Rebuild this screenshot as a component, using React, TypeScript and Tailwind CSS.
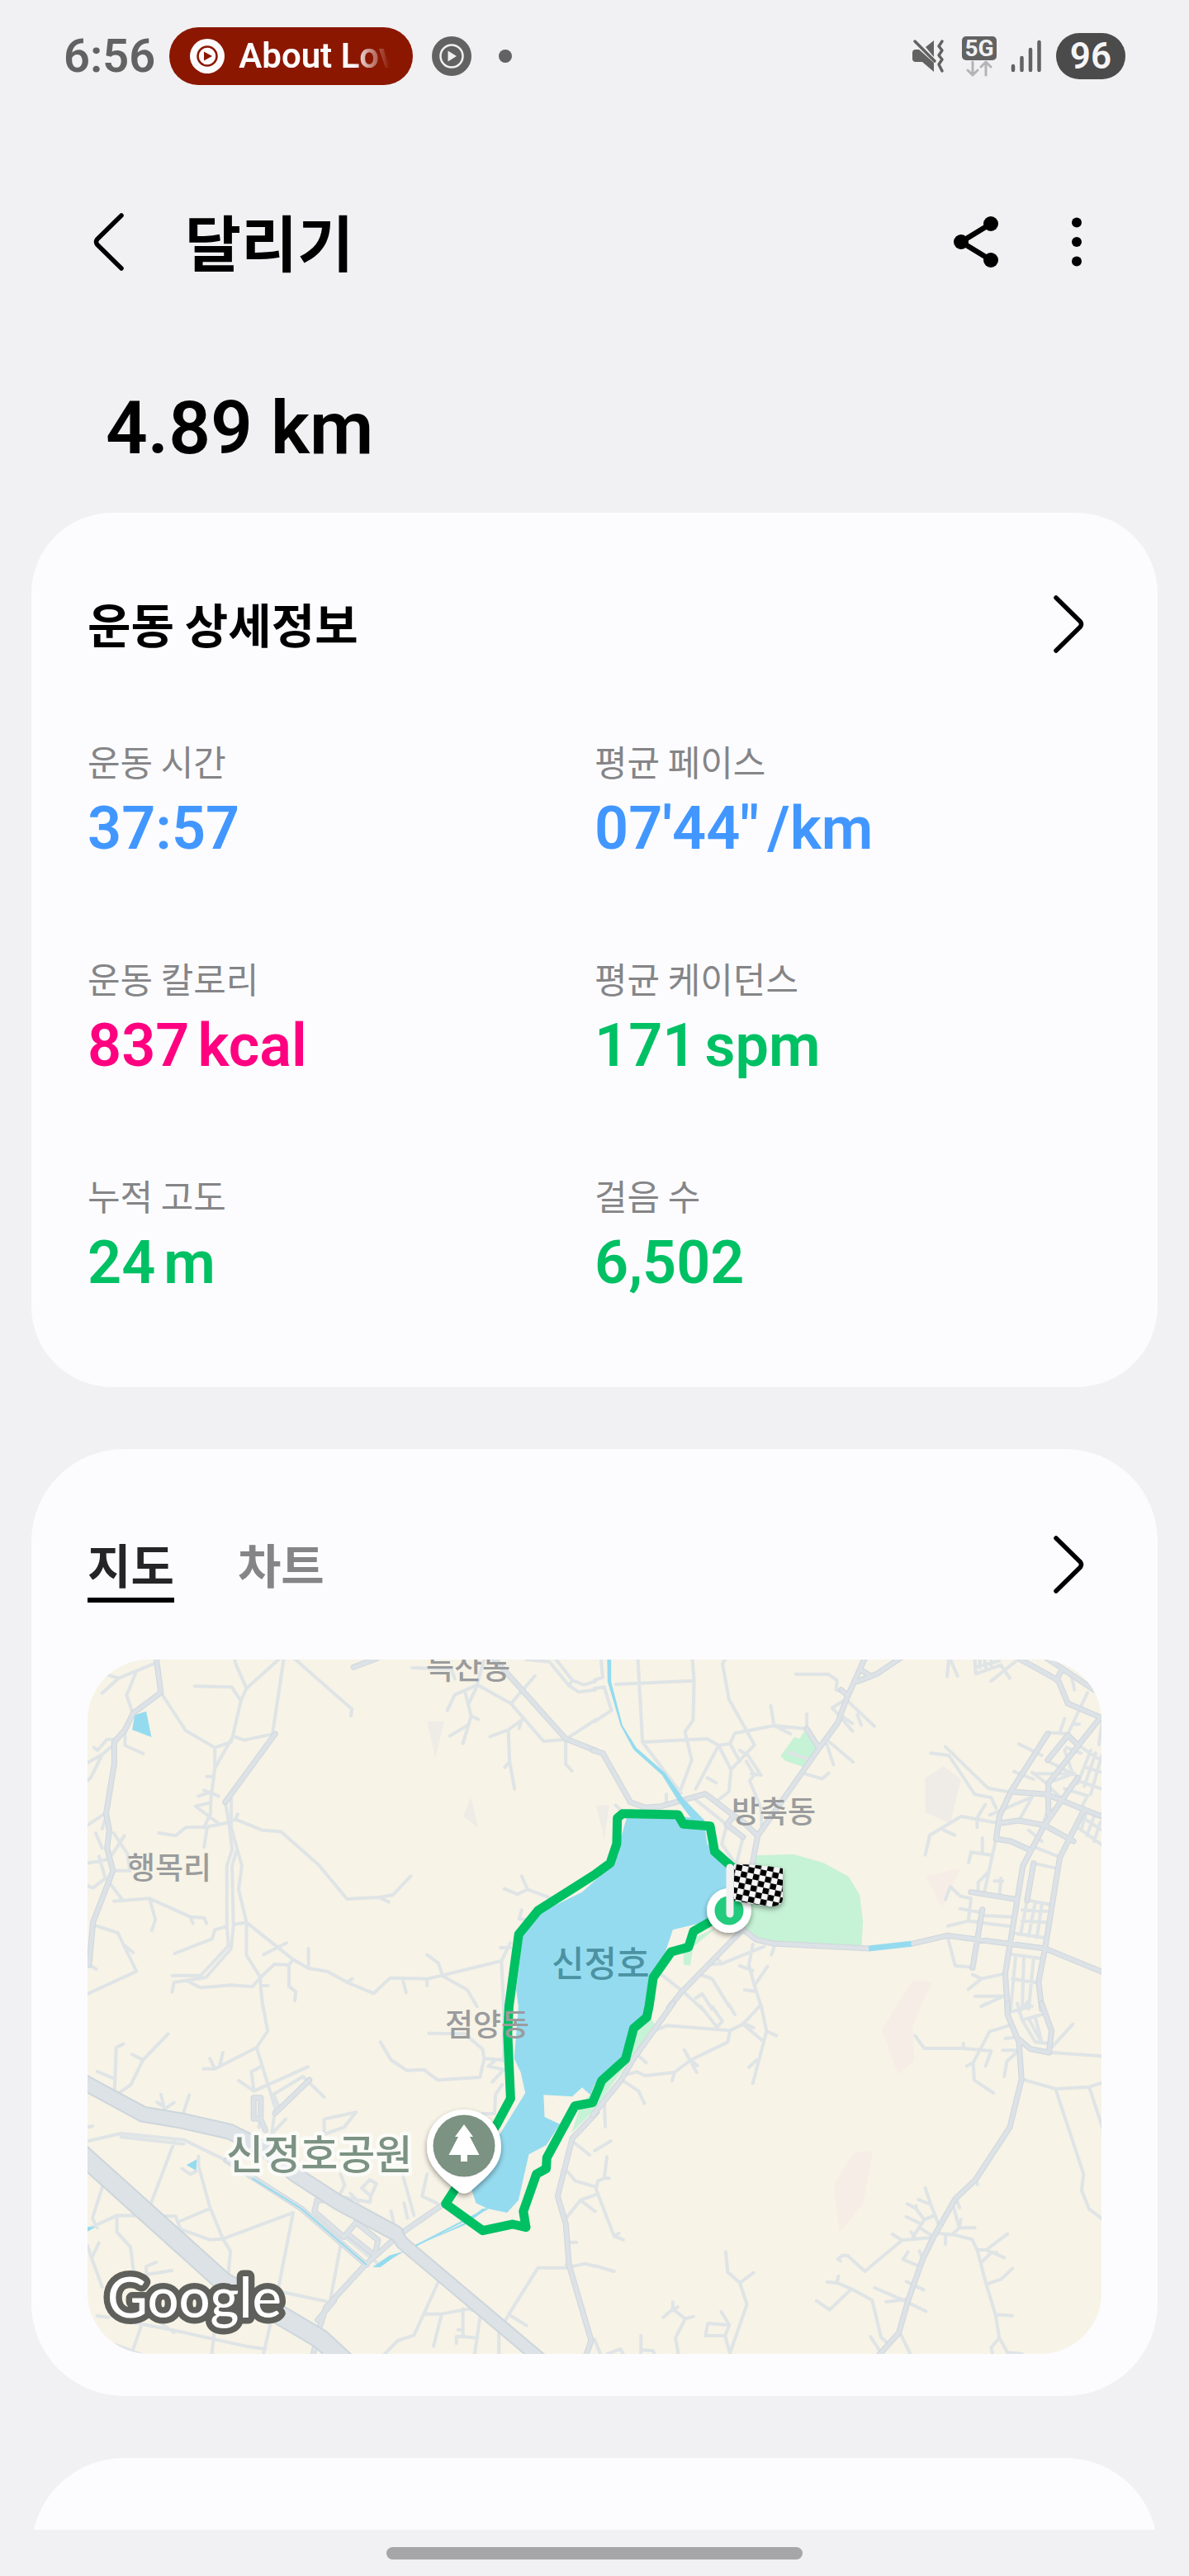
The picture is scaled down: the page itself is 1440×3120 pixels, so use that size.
import React, { useState } from 'react';

const metrics = [
  { label: '운동 시간', value: '37:57', unit: '', color: 'text-[#4297ff]' },
  { label: '평균 페이스', value: '07\'44"', unit: '/km', color: 'text-[#4297ff]' },
  { label: '운동 칼로리', value: '837', unit: 'kcal', color: 'text-[#ff0080]' },
  { label: '평균 케이던스', value: '171', unit: 'spm', color: 'text-[#00c064]' },
  { label: '누적 고도', value: '24', unit: 'm', color: 'text-[#00c064]' },
  { label: '걸음 수', value: '6,502', unit: '', color: 'text-[#00c064]' }
];

const tabs = ['지도', '차트'];

// Map tiles: each one has its own 1568x1290 grid, (x, y) is its place in the mosaic
const tiles = [
  {
    x: 0,
    y: 0,
    minor:
      'M75 85L110 98L225 42M60 152L110 98M165 72L135 160L152 220M240 150L316 288L405 350L455 330L460 308L485 180L502 135L605 25M467 25V40L502 135M343 127L457 130L485 180M616 30L582 298M460 308L495 323L592 298M650 28L825 210L822 235M455 320L405 425M405 350V425L392 550V590M130 290V342L186 372M35 350L46 360L75 320H95M15 405L60 375L95 340M60 375L25 460L15 470M15 632L68 590M60 645L72 600M380 455H400M355 527L390 512L416 526M372 505L390 515M392 550L346 563L416 625M392 590L372 640M233 660L285 670L316 640L382 638L448 622L468 610L550 650L607 655L722 775L810 900L908 894L950 886L1005 817M908 894L938 911M382 638L372 712M468 610L475 592M437 548L448 622L458 720L442 780V1000L447 1070L362 1178H275M455 525V640L488 780L478 865L502 985L645 1120L692 1152L750 1163L810 1203L892 1243L942 1187L1058 1190L1103 1177L1283 1125L1310 1060M470 730L458 780L462 1000L455 1080L378 1185L280 1203L274 1238M325 1200L360 1222L455 1213L520 1219L545 1185L588 1137L632 1140L645 1120M502 985V1105L545 1185V1215L553 1300M545 1215H568M632 1140V1217L653 1237L650 1270M692 1152V1080M555 1102L625 1060M502 985L462 993M440 1000L405 1012L397 1045L282 1098M810 1203L826 1190M980 1190L991 1240M1055 1190V1215M1055 1103L1090 1133L1103 1180L1178 1230L1208 1290M1283 1125L1290 1300M96 908L205 898L330 965L372 968L380 988M330 965L338 988M205 898L223 975L212 1015M85 845L120 900M35 995L108 1023L165 1163L15 1245M130 1070L155 1095M95 797H145L137 735L95 660M128 670L90 740M15 770L80 755M50 745L70 825L32 860L15 852M40 660L60 715M20 1140L42 1155M1010 60L1130 65L1140 100M1210 122L1140 158L1117 215M1210 122L1183 190M1172 150L1190 235L1165 335M1190 235L1212 247M1125 308L1180 268M1210 122L1312 190L1412 327L1480 320L1570 250M1312 190L1385 90M1345 250L1304 285L1248 310M1345 250L1337 280M1304 285L1308 400L1323 500M1308 400L1293 422M1480 320V410L1499 435M1360 30L1430 38L1490 125L1520 148L1570 140M1450 30L1500 105L1535 122L1570 110M1500 105L1490 125M1230 30L1208 122M1345 817L1363 865L1430 895M1292 863L1333 883L1363 865M1345 940L1337 972L1355 975M1280 1077H1310',
    major:
      'M225 20L240 150L155 225L130 285L97 330V410L72 590L82 650L75 715L93 797L32 985L20 1140M1255 20L1480 318L1575 362M830 58L900 26M590 300L437 548'
  },
  {
    x: 1568,
    y: 0,
    minor:
      'M0 255L52 215L30 130L0 135M20 30L25 95L0 105M133 30L147 330L345 318L380 342M65 120L303 107M300 30L305 107L302 250L277 293L298 395L265 500M147 330L265 515M400 30L392 45L412 175L490 340L418 430L412 510L380 540M380 342L310 500M380 342L415 335L430 298L550 270L650 282V228M540 198L550 270L600 300M380 342L418 430M415 335L445 400M445 360L470 378L510 450L480 445M465 400L490 450L475 470L510 570L512 640M345 460L372 478M616 83H715L743 105L740 140L765 150M765 178L728 205L790 290M745 225L790 262M775 180L857 272M805 230L817 268M720 330L792 402M712 340L732 412M645 445L698 463L717 443M220 520V560M65 560L100 600M300 530L405 630L390 700L430 770M455 675L435 770M350 1138L390 1135L520 1072M375 1115L390 1135M485 1065L473 1140L490 1215L513 1300M445 1143L485 1160M490 1215L530 1145M460 1230L490 1235M550 1075L542 1103M205 1175L275 1240L330 1300M325 1175L360 1190L412 1290M310 1260L330 1245L360 1300M1030 370L1085 378L1165 520L1215 532L1230 570M1075 347L1205 497L1275 512M1300 337L1370 378M1285 437L1345 465M1345 445L1470 445M1210 595L1340 530M1013 740L1027 668L1123 600L1240 625M1070 650L1103 668M1197 557L1172 605V640M1188 678V735M1146 768L1153 730L1215 740M1230 680L1208 800L1175 840V870M1208 800L1195 870M1225 835H1250M1245 825L1240 890M1075 902L1090 855L1120 890L1153 898L1145 980L1083 998M1120 935L1190 950M1147 980L1275 1000M1188 960L1280 965M1083 1045L1105 1143L1158 1148M1158 1175L1185 1190L1255 1172M1185 1190L1145 1228M1165 1253H1253L1185 1290M1085 30L1080 92M1090 30L1112 90M1165 30L1168 82L1245 50M1180 30V60M1175 55L1240 35M1195 35L1200 65M1215 20V60M1245 50L1272 98M1215 108L1295 32M1460 85L1470 140M1510 150L1450 300M1440 245L1425 295M1470 265H1485M1450 300L1388 295M1480 340L1568 410M1445 350L1490 370M1390 400L1480 455M1410 470L1465 445M1440 360L1465 445M1480 470L1553 500M1500 420L1568 445M1520 360L1480 480M1535 370L1500 490M1553 380L1520 520M1555 250L1545 340M1385 480L1340 440M1390 490L1440 545M1420 560L1390 590M1440 500L1510 525L1495 560M1385 590L1350 700M1330 650L1370 690M1480 640L1568 715M1490 600L1568 660M1505 590L1490 650M1530 600L1508 670M1550 620L1530 690M1355 715L1430 750M1345 770L1420 790M1330 905L1395 920M1325 905L1305 1030M1350 910L1330 1035M1370 920L1355 1040M1310 940L1385 945M1310 980L1380 985M1290 1025L1375 1040M1270 1100L1365 1115M1290 1105L1275 1300M1315 1110L1310 1300M1345 1115L1330 1300M1280 1190L1360 1205M1340 530L1300 615',
    major:
      'M-5 360L25 370L110 548L155 568L205 563L340 518L430 600L455 620L500 670M405 630L425 600M410 635L455 675M830 20L770 178L745 260L688 352L500 670L483 775M940 22L865 82L805 110M820 70L845 90M650 282L688 352M755 140L775 160M455 1010L495 1048L550 1062L840 1080M970 1063L1080 1033L1380 1080L1575 1175M455 1010L265 1240L228 1295M1305 30L1420 105L1450 190L1550 240L1390 480V590M1388 300L1275 510L1240 600L1230 682L1275 690L1330 720M1275 510L1385 520L1500 575L1575 610M1240 625L1300 615L1378 632L1467 690M1388 395L1450 305L1480 340M1480 460L1378 632L1312 780L1295 902L1258 1170L1265 1300M1500 575L1425 750L1380 1080L1360 1200L1370 1300M1153 875L1295 902M1345 770L1325 905M1188 938L1158 1150M1385 25L1530 140M1430 70L1415 105'
  },
  {
    x: 0,
    y: 1290,
    minor:
      'M553 0L567 90L533 150L590 370L580 460M125 137L103 150L98 310M262 100L185 195L148 285L105 320M152 175L185 195M45 237L98 263M370 227H405L533 150M390 190L405 227M430 168L420 215M240 320L250 370M228 348L255 370L280 350M327 322L305 400M478 270L525 308L690 220M545 220L517 238L525 308M605 375L585 320L675 255L740 330M540 440L545 400M622 410L575 470M740 460V410L838 385L800 440L740 465M912 130L945 195L993 233L1045 230L1088 268L1217 258L1230 190L1225 155L1170 100L1060 98M1230 190L1290 195M1260 200L1243 218L1290 230L1255 275M1290 200V-5M1285 285L1265 320L1262 390H1225M15 490L118 462L310 485L440 560M118 475L310 500M282 490L210 715M355 545V580L390 730L430 845L453 890L445 990M305 590L330 610L348 600M25 600L65 640L30 770L45 805M15 810L105 760L285 763L300 810L390 848L430 845L645 750M300 780L390 735M105 760V820L147 875L160 1000M50 860L28 915L60 1020M15 870L28 915M273 960L195 975V945L225 930M645 750L598 1035L553 1270M598 1035L745 1072M790 870L760 1060M160 1150L290 1180L500 1235L560 1245M405 1170L395 1270M180 1160L150 1263M215 1130L280 1185M100 1230L190 1270M45 1125L80 1130M855 660L880 630L900 645L883 690L855 660M785 690L880 712L883 690M790 610L803 650L785 690M820 680L845 710M980 610L1015 760M1055 610L1040 690L1085 715M945 745L955 800M985 715L995 770M805 840L900 930M15 440L30 435M1570 945L1540 935L1480 950H1395L1305 1120L1360 1160M1480 950L1490 900M1090 1000L1045 1118H1100L1180 1100L1215 1110M1045 1118L1015 1195L965 1215L920 1270M1100 1118L1075 1235M1165 1100V1200L1210 1205M1165 1200H1145V1225M1220 1110L1200 1270M1150 1175H1165M1300 1130L1275 1190V1270M1485 600L1510 635L1570 655M1570 685L1525 705L1480 770M1500 490L1553 540M1525 705L1570 745M1490 858H1513',
    major:
      'M735 705H718L710 745L800 838L838 785M815 830L895 905L905 850L838 785M1110 715L970 830L865 940L745 1095L720 1190L705 1275M720 1140L770 1070M1575 385L1500 480L1455 690L1480 790L1490 940L1558 1215L1540 1275M560 450L545 408H524V332H546V400M590 388L695 268M440 560L670 735L870 940'
  },
  {
    x: 1568,
    y: 1290,
    minor:
      'M190 85L222 70L415 88L455 65L505 0M325 0L375 75L392 55L360 0M410 -10L430 30M415 88L408 130L295 195L245 240L155 252L130 238L90 250M275 158L313 240M295 195L315 215M245 240L238 270M455 65L518 128M510 -5L527 90L485 280M527 90L557 107M455 60L487 78M497 195L473 222M135 180L158 205M80 265L135 308L153 353M30 350L33 438M0 525L50 490M38 547L30 625L10 635L5 665L60 835L88 848M60 835L75 825M30 625H45M0 942L60 963M402 892L408 965L445 1005L467 1083L412 1270M445 1005L487 968M210 1130L240 1100L278 1135L248 1205L258 1270M240 1100V1075M240 1105L255 1092M278 1135L303 1127M388 1110L413 1158L400 1197H340L347 1152L413 1158M400 1197L412 1250M142 1197V1270M142 1248L180 1252L185 1270M0 1210L20 1270M40 1263L80 1245L90 1270M982 107L1010 153H1130L1215 162L1198 217M1130 135V153M1275 68L1210 92L1160 205L1163 268L1222 315M1160 205L1140 217M1258 117L1290 112M1250 160H1300L1263 200L1255 255M1465 65L1400 150M1400 168L1575 183M1310 265L1412 300L1515 293L1575 270M1412 300L1498 610L1492 668L1515 737L1575 790M1515 293L1575 510M1295 -10L1310 50L1350 130L1390 135M1310 50L1370 30M1330 45L1368 130M1350 40L1370 130M1275 20L1340 0M1300 20L1330 -20M1185 0L1200 -10M1013 660L1030 720L1053 790M992 702L1030 720M958 718L985 735L1010 775L975 840M985 735V725M955 765L1000 790M1010 775L1040 760M997 805L1035 835M912 828L942 850L1035 840M942 850L828 963L775 905L760 905L745 918L753 925M970 820L980 840M1050 825L1100 830L1157 847L1172 885L1200 1010L1228 1120L1240 1205L1265 1258L1310 1263M1240 1205L1215 1240L1220 1270M1228 1120L1280 1124M1200 1010L1245 992L1280 953M1172 885H1200L1265 827M1200 885L1255 913M1185 930L1215 895H1232M1100 730L1117 805H1165M1095 830L1117 805L1122 775M1075 830V865M1108 700L1118 732M1167 630L1173 647M960 893L945 920L990 942M995 890L1005 915M955 1000L1008 1030M858 1023L935 1062L1015 1108M893 1074L955 1065M712 1002L743 1005L787 1027L850 1067L878 1203L895 1222M743 1005L747 980M787 1027L720 1103L680 1070M845 1200L880 1263M935 1185L970 1270',
    major:
      'M240 -10L120 190L80 270L-5 395M1265 -10V30L1300 130L1308 265L1272 440L1167 630L1105 700L1040 835L1005 920L960 1070L932 1187L865 1275M1300 120L1335 155L1392 168L1400 90L1370 -10'
  }
];

const highways = [
  { d: 'M-10 1820L430 2290L730 2500L830 2610', width: 21, casing: 25 },
  { d: 'M-5 1560L185 1682L300 1705L450 1745L560 1810L650 1900L780 2000L960 2115', width: 16, casing: 20 },
  { d: 'M960 2115L980 2150L1410 2580', width: 13, casing: 17 }
];

const placeLabels = [
  { name: '늑산동', x: 410, y: 24 },
  { name: '방축동', x: 780, y: 198 },
  { name: '행목리', x: 48, y: 266 },
  { name: '점양동', x: 433, y: 456 }
];

function Chevron({ direction }: { direction: 'left' | 'right' }) {
  return (
    <svg className="w-[40px] h-[72px]" viewBox="0 0 40 72" fill="none" stroke="currentColor" strokeWidth="5.5" strokeLinecap="round" strokeLinejoin="round">
      {direction === 'left' ? <path d="M35 4L5.500 33Q3.500 36 5.500 39L35 68" /> : <path d="M5 4L34.500 33Q36.500 36 34.500 39L5 68" />}
    </svg>
  );
}

function StatusBar() {
  return (
    <div className="flex items-center justify-between h-[136px] px-[77px] shrink-0 font-[Roboto,'Noto_Sans_CJK_KR',sans-serif]">
      <div className="flex items-center">
        <span className="text-[56px] leading-[64px] font-semibold text-[#626262]">6:56</span>
        <div className="ml-[17px] flex items-center gap-4 w-[295px] h-[70px] pl-6 pr-7 rounded-full bg-[#8b1700]">
          <svg className="w-[44px] h-[44px] shrink-0" viewBox="0 0 44 44">
            <circle cx="22" cy="22" r="21" fill="#fcfcff" />
            <circle cx="22" cy="22" r="11.500" fill="none" stroke="#8b1700" strokeWidth="2.500" />
            <path d="M18 16.500L28 22L18 27.500Z" fill="#8b1700" />
          </svg>
          <span className="overflow-hidden whitespace-nowrap text-[42px] leading-[52px] font-semibold text-[#fcfcff] [mask-image:linear-gradient(to_right,black_76%,transparent)]">
            About Love
          </span>
        </div>
        <svg className="ml-[23px] w-[48px] h-[48px]" viewBox="0 0 48 48">
          <circle cx="24" cy="24" r="24" fill="#626262" />
          <circle cx="24" cy="24" r="13.500" fill="none" stroke="#f1f1f3" strokeWidth="2.500" />
          <path d="M19.500 17.500L30 24L19.500 30.500Z" fill="#f1f1f3" />
        </svg>
        <span className="ml-[33px] w-4 h-4 rounded-full bg-[#626262]" />
      </div>
      <div className="flex items-center">
        {/* Muted, vibrating */}
        <svg className="w-[42px] h-[42px]" viewBox="0 0 42 42" fill="#626262">
          <path d="M2 17Q2 13 6 13H10L28 29V40L14 28H6Q2 28 2 24Z" />
          <path d="M18 10L28 2V22Z" />
          <path d="M5 3L29 27" stroke="#626262" strokeWidth="3.500" strokeLinecap="round" />
          <path d="M38 3L34 9L38 14L34 20L38 25L34 31L38 39" fill="none" stroke="#626262" strokeWidth="3.500" strokeLinecap="round" strokeLinejoin="round" />
        </svg>
        <div className="ml-5 flex flex-col items-center">
          <span className="flex items-center justify-center w-[42px] h-[29px] rounded-[5px] bg-[#626262] text-[28px] leading-[29px] font-bold text-[#f1f1f3]">5G</span>
          <svg className="w-[32px] h-[20px]" viewBox="0 0 32 20" fill="none" stroke="#b4b4b6" strokeWidth="3" strokeLinecap="round" strokeLinejoin="round">
            <path d="M8 2V18M2 12L8 18L14 12M24 18V2M18 8L24 2L30 8" />
          </svg>
        </div>
        <svg className="ml-4 w-[40px] h-[42px]" viewBox="0 0 40 42" stroke="#626262" strokeWidth="4.500" strokeLinecap="round">
          <path d="M4 33V38M14.500 23V38M25 13V38M35.500 4V38" />
        </svg>
        <span className="ml-4 flex items-center justify-center w-[84px] h-[56px] rounded-full bg-[#4b4b4b] text-[44px] leading-[56px] font-semibold text-[#f5f5f7]">96</span>
      </div>
    </div>
  );
}

function RouteMap() {
  return (
    <svg className="block w-full" viewBox="0 0 1228 841" role="img" aria-label="지도" fill="none">
      <defs>
        <pattern id="checker" width="15" height="14" patternUnits="userSpaceOnUse" patternTransform="rotate(12) translate(3 2)">
          <rect width="15" height="14" fill="#f4f4f4" />
          <rect width="7.500" height="7" fill="#000" />
          <rect x="7.500" y="7" width="7.500" height="7" fill="#000" />
        </pattern>
        <filter id="shadow" x="-30%" y="-30%" width="160%" height="160%">
          <feDropShadow dx="0" dy="3" stdDeviation="3" floodOpacity="0.4" />
        </filter>
      </defs>
      <rect width="1228" height="841" fill="#f7f3e6" />

      <g transform="translate(-6 -10) scale(0.39541 0.33333)">
        {/* Built-up areas */}
        <g fill="#efebe6">
          <path d="M2581 460L2638 418L2690 465L2658 625L2581 585ZM1573 560H1613L1598 680ZM1055 255H1107L1081 388ZM1190 532L1212 642L1166 600Z" />
        </g>
        <g fill="#f6ede7">
          <path d="M2583 815L2688 790L2633 935ZM2543 1197L2603 1200L2568 1290L2543 1360L2546 1490L2498 1537L2448 1375L2493 1290ZM2363 1822L2421 1815L2390 2010L2318 2112L2301 1938Z" />
        </g>
        {/* Parks */}
        <g fill="#c6f2d6">
          <path d="M2058 742L2178 738L2268 768L2346 818L2380 885L2390 980L2386 1070L2128 1058L2063 1045L2010 990L2040 850Z" />
          <path d="M2180 312L2196 318L2210 290L2256 352L2213 422L2153 398L2138 380Z" />
          <path d="M1840 1060L1940 1005L1870 1075L1861 1143L1841 1138ZM1733 1320L1753 1355L1568 1665L1498 1750L1525 1650L1600 1550Z" />
        </g>

        <g strokeLinecap="round" strokeLinejoin="round">
          {tiles.map((tile, index) => (
            <g key={index} transform={`translate(${tile.x} ${tile.y})`}>
              <path d={tile.minor} stroke="#dfe4e6" strokeWidth="4" vectorEffect="non-scaling-stroke" />
            </g>
          ))}
          <path d="M2163 368L2218 390" stroke="#dfe4e6" strokeWidth="4" vectorEffect="non-scaling-stroke" />
          {tiles.map((tile, index) => (
            <g key={index} transform={`translate(${tile.x} ${tile.y})`}>
              <path d={tile.major} stroke="#cfd7dd" strokeWidth="7" vectorEffect="non-scaling-stroke" />
              <path d={tile.major} stroke="#dce2e6" strokeWidth="5" vectorEffect="non-scaling-stroke" />
            </g>
          ))}
          {highways.map((road) => (
            <path key={road.d} d={road.d} stroke="#cdd6dc" strokeWidth={road.casing} vectorEffect="non-scaling-stroke" />
          ))}
          {highways.map((road) => (
            <path key={road.d} d={road.d} stroke="#dce2e6" strokeWidth={road.width} vectorEffect="non-scaling-stroke" />
          ))}
        </g>

        {/* Water */}
        <g fill="#95dbef">
          <path d="M1668 600L1830 600L1903 610L1913 700L1988 800L1968 900L1918 980L1808 1012L1783 1100L1733 1200L1718 1330L1683 1370L1658 1480L1568 1575L1555 1612L1530 1585L1500 1618L1412 1612L1415 1692L1462 1718L1420 1795L1367 1828L1335 1995L1300 2040L1240 2025L1205 2005L1190 1950L1270 1770L1356 1605L1342 1530L1322 1480L1335 1290L1328 1230L1350 1020L1400 950L1530 875L1568 835L1623 780L1648 680Z" />
          <path d="M1607 30H1619L1619 110L1654 270L1696 350L1784 442L1840 535L1903 612L1865 608L1825 545L1775 450L1688 358L1648 270L1608 110Z" />
          <path d="M160 232L195 218L211 312L152 285ZM350 1846L348 1887L318 1867ZM0 2092H40L10 2112ZM888 2237L912 2238L950 2205L985 2180L940 2195ZM1240 2025L1170 2085L1020 2160L1165 2080L1225 2025Z" />
        </g>
        <path d="M2408 1080L2538 1063" stroke="#95dbef" strokeWidth="7" vectorEffect="non-scaling-stroke" />
        <path d="M520 1915L670 2025L870 2230M1020 2160L1240 2025" stroke="#95dbef" strokeWidth="2" vectorEffect="non-scaling-stroke" />

        {/* Run track */}
        <path
          d="M1990 785L1936 728L1922 635L1840 628L1824 594L1654 590L1638 606L1636 700L1616 770L1568 812L1395 942L1336 1028L1306 1290L1302 1390L1311 1625L1268 1720L1112 2008L1226 2105L1318 2082L1358 2093L1350 2035L1390 1900L1420 1880L1422 1840L1508 1652L1562 1640L1590 1560L1663 1482L1688 1370L1728 1330L1735 1290L1748 1185L1803 1092L1856 1075L1871 1018L1981 943"
          stroke="#00c064"
          strokeWidth="11"
          strokeLinejoin="round"
          vectorEffect="non-scaling-stroke"
        />
      </g>

      <g className="font-['Noto_Sans_CJK_KR',sans-serif] font-medium" fill="#9a9c9d">
        {placeLabels.map((place) => (
          <text key={place.name} x={place.x} y={place.y} fontSize="37">
            {place.name}
          </text>
        ))}
        <text x="562" y="384" fontSize="43" fill="#4b92a3">신정호</text>
        <text x="168" y="617" fontSize="49" fill="#7c9283" stroke="#fcfcfa" strokeOpacity="0.850" strokeWidth="9" strokeLinejoin="round" paintOrder="stroke">신정호공원</text>
      </g>

      {/* Park pin */}
      <g filter="url(#shadow)">
        <path d="M456 545C481 545 501 564 501 590C501 612 486 624 466 642Q456 651 446 642C426 624 411 612 411 590C411 564 431 545 456 545Z" fill="#fff" />
      </g>
      <circle cx="456" cy="589" r="37.500" fill="#7c9283" />
      <path d="M456 563L467 578H463L474.500 600H460V608H452V600H437.500L449 578H445Z" fill="#fff" />

      {/* Finish marker and flag */}
      <circle cx="777" cy="304" r="27" fill="#fff" filter="url(#shadow)" />
      <circle cx="777" cy="304" r="17.500" fill="#22cb7d" />
      <path d="M783 248Q812 248 842 253V290Q841 299 826 299L783 292Z" fill="url(#checker)" filter="url(#shadow)" />
      <path d="M778 252V308" stroke="#f2f2f2" strokeWidth="9" strokeLinecap="round" />

      <text x="24" y="797" fontSize="67" fill="#fff" stroke="#5f5f5b" strokeWidth="15" strokeLinejoin="round" paintOrder="stroke" className="font-[Lato,sans-serif] font-medium">Google</text>
    </svg>
  );
}

export default function App() {
  const [activeTab, setActiveTab] = useState('지도');

  return (
    <div className="flex flex-col h-screen bg-[#f1f1f3] text-black font-['Noto_Sans_CJK_KR',sans-serif]">
      <StatusBar />

      <main className="flex-1 overflow-y-auto [scrollbar-width:none]">
        {/* Header */}
        <header className="flex items-center justify-between h-[140px] mt-[87px] pl-[112px] pr-[128px]">
          <div className="flex items-center gap-[72px]">
            <button type="button" aria-label="뒤로">
              <Chevron direction="left" />
            </button>
            <h1 className="pb-1 text-[74px] leading-[96px] font-bold">달리기</h1>
          </div>
          <div className="flex items-center gap-[84px]">
            <button type="button" aria-label="공유">
              <svg className="w-[60px] h-[68px]" viewBox="0 0 60 68">
                <path d="M48 12L12 34L48 56" fill="none" stroke="#000" strokeWidth="6.500" />
                <circle cx="48" cy="12" r="9" />
                <circle cx="12" cy="34" r="9" />
                <circle cx="48" cy="56" r="9" />
              </svg>
            </button>
            <button type="button" aria-label="더보기">
              <svg className="w-[16px] h-[68px]" viewBox="0 0 16 68">
                <circle cx="8" cy="10.500" r="6" />
                <circle cx="8" cy="34" r="6" />
                <circle cx="8" cy="57.500" r="6" />
              </svg>
            </button>
          </div>
        </header>

        <p className="mt-[106px] pl-[128px] text-[89px] leading-[100px] font-semibold font-[Roboto,sans-serif]">4.89 km</p>

        <div className="flex flex-col gap-[75px] mt-[52px] px-[38px]">
          {/* Workout details */}
          <section className="px-[68px] pt-[103px] pb-[110px] rounded-[98px] bg-[#fcfcff]">
            <div className="flex items-center justify-between pr-[20px] h-[64px]">
              <h2 className="pb-1 text-[57px] leading-[60px] font-bold">운동 상세정보</h2>
              <button type="button" aria-label="운동 상세정보">
                <Chevron direction="right" />
              </button>
            </div>
            <dl className="grid grid-cols-2 gap-y-[112px] mt-[105px]">
              {metrics.map((metric) => (
                <div key={metric.label}>
                  <dt className="text-[43px] leading-[56px] text-[#858587]">{metric.label}</dt>
                  <dd className={`flex items-baseline gap-[10px] mt-[15px] text-[72px] leading-[80px] font-semibold font-[Roboto,sans-serif] ${metric.color}`}>
                    <span>{metric.value}</span>
                    {metric.unit && <span>{metric.unit}</span>}
                  </dd>
                </div>
              ))}
            </dl>
          </section>

          {/* Map / chart */}
          <section className="px-[68px] pt-[108px] pb-[51px] rounded-[112px] bg-[#fcfcff]">
            <div className="flex items-center justify-between pr-[20px] h-[64px]">
              <div role="tablist" className="flex items-start gap-[77px] h-[64px]">
                {tabs.map((tab) => (
                  <button
                    key={tab}
                    type="button"
                    role="tab"
                    aria-selected={tab === activeTab}
                    onClick={() => setActiveTab(tab)}
                    className={`pb-3 border-b-[6px] text-[57px] leading-[60px] font-bold ${
                      tab === activeTab ? 'border-black text-[#252527]' : 'border-transparent text-[#858587]'
                    }`}
                  >
                    {tab}
                  </button>
                ))}
              </div>
              <button type="button" aria-label="지도 상세">
                <Chevron direction="right" />
              </button>
            </div>
            <div className="mt-[83px] rounded-[74px] overflow-hidden">
              <RouteMap />
            </div>
          </section>

          <section className="h-[400px] rounded-[112px] bg-[#fcfcff]" />
        </div>
      </main>

      {/* Gesture bar */}
      <footer className="flex justify-center items-center h-[56px] shrink-0">
        <span className="w-[35%] h-[15px] rounded-full bg-[#a6a6a8]" />
      </footer>
    </div>
  );
}
